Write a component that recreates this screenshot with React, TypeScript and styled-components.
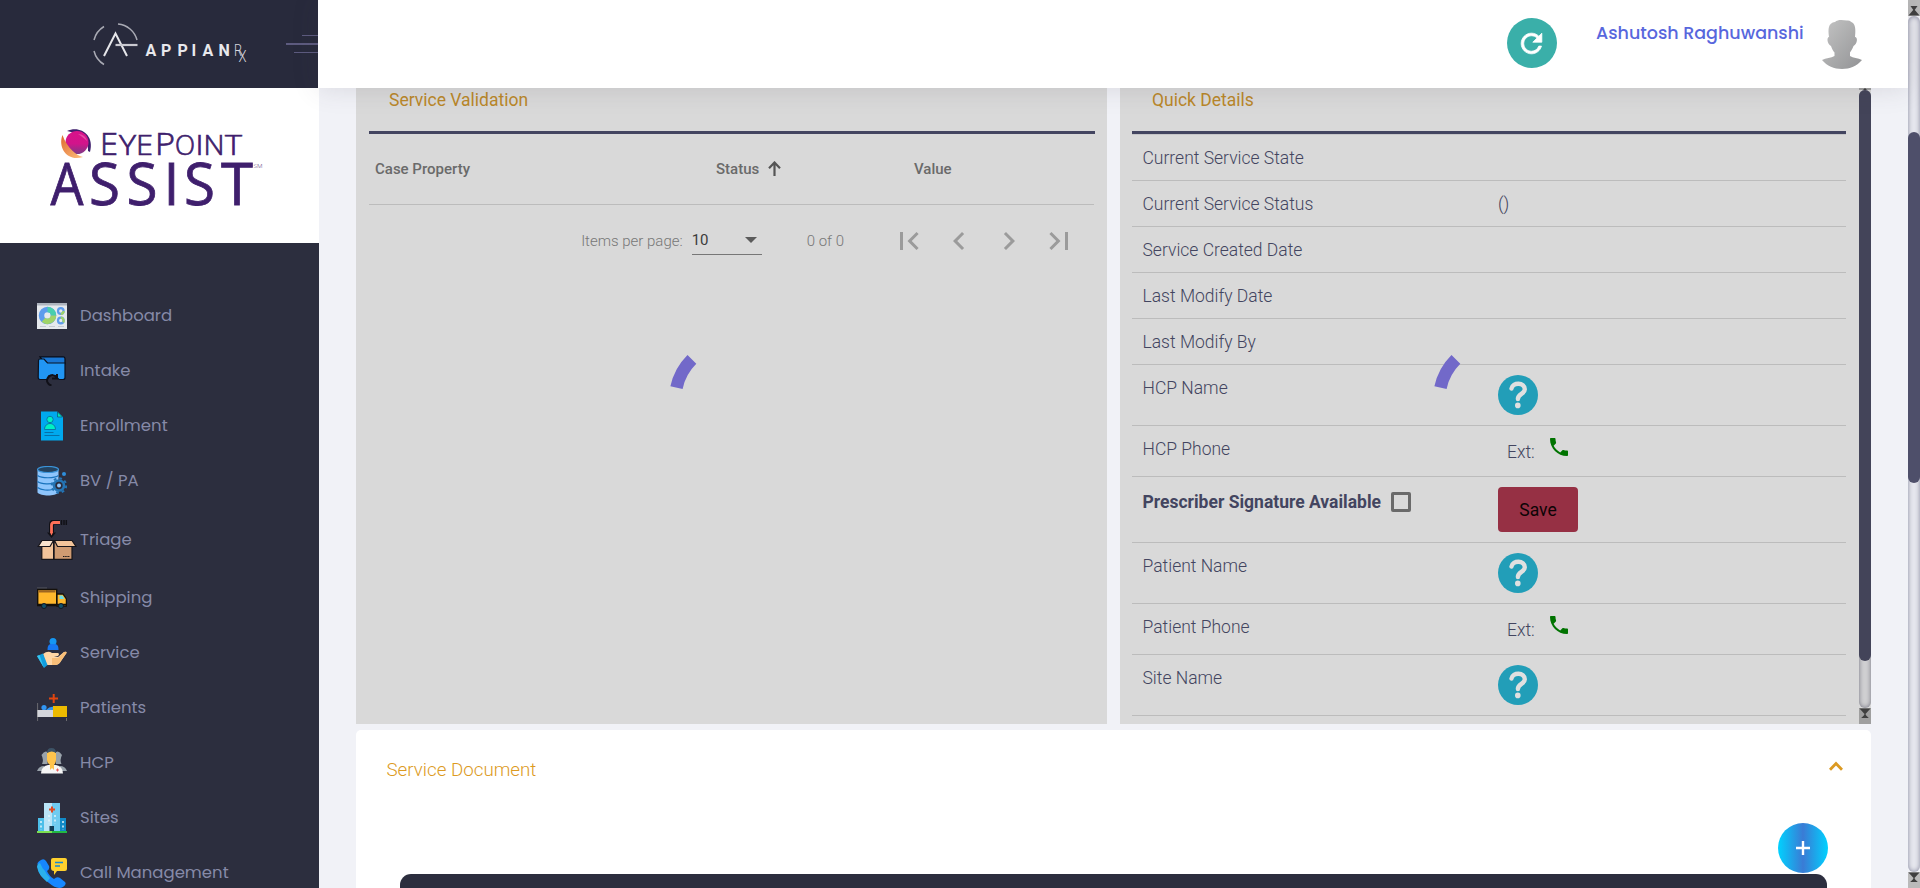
import React from 'react';
import styled, { createGlobalStyle } from 'styled-components';

const sans = `Roboto, "Liberation Sans", sans-serif`;
const geo = `Poppins, Inter, "Open Sans", sans-serif`;

const GlobalStyle = createGlobalStyle`
  *, *::before, *::after { box-sizing: border-box; }
  body { margin: 0; background: #f1f2f7; font-family: ${sans}; font-weight: 300; overflow: hidden; }
  svg { display: block; flex: none; }
`;

const Screen = styled.div`display: flex; height: 888px; overflow: hidden;`;
const Page = styled.div`flex: 1; min-width: 0; display: flex; flex-direction: column;`;
const TopBar = styled.div`display: flex; height: 88px; flex: none;`;
const Brand = styled.div`
  width: 318px; background: #282a3c; display: flex; flex: none;
`;
const Header = styled.header`
  flex: 1; background: #fff; position: relative; z-index: 2;
  box-shadow: 0 1px 24px 1px rgba(69, 65, 78, 0.13);
  display: flex; justify-content: flex-end; padding: 18px 46px 0 0;
`;
const RefreshButton = styled.button`
  width: 50px; height: 50px; border: 0; border-radius: 50%; padding: 0 2px 0 0;
  background: #3aafa9; display: flex; align-items: center; justify-content: center;
  margin-right: 39px;
`;
const UserName = styled.span`
  width: 209px; margin-right: 17px; font: 500 17.5px/30px ${geo};
  color: #5867dd; white-space: nowrap;
`;
const Body = styled.div`flex: 1; display: flex; min-height: 0;`;
const Sidebar = styled.aside`
  width: 319px; flex: none; background: #2c2e3e; overflow: hidden;
`;
const LogoPanel = styled.div`height: 155px; background: #fff;`;
const Nav = styled.nav`padding-top: 45.5px;`;
const NavItem = styled.a<{ $tall?: boolean }>`
  height: ${p => (p.$tall ? 62 : 55)}px; display: flex; align-items: center; padding-left: 37px;
`;
const NavIcon = styled.span<{ $tall?: boolean }>`
  width: 43px; flex: none;
  svg { width: ${p => (p.$tall ? 40 : 30)}px; height: ${p => (p.$tall ? 40 : 30)}px; }
`;
const NavLabel = styled.span<{ $tall?: boolean }>`
  font: 400 16.5px/24px ${geo}; color: #868aa8; white-space: nowrap;
  padding: ${p => (p.$tall ? '1px 0 0' : '0 0 1px')};
`;

const Content = styled.main`
  flex: 1; min-width: 0; padding: 0 37px; display: flex; flex-direction: column; gap: 6px;
`;
const Panels = styled.div`display: flex; gap: 13px; height: 636px; flex: none;`;
const Panel = styled.section`
  position: relative; width: 751px; background: #d9d9d9; display: flex;
`;
const PanelInner = styled.div<{ $right?: boolean }>`
  flex: 1; padding: ${p => (p.$right ? '0 13px 0 12px' : '0 12px 0 13px')}; overflow: hidden;
`;
const PanelTitle = styled.h3`
  margin: 0; height: 46px; padding: 1px 0 0 20px; border-bottom: 3px solid #434560;
  font: 400 17.5px/22px ${sans}; color: #b98729;
`;
const HeadRow = styled.div`
  height: 71px; display: grid; grid-template-columns: 341px 198px 1fr; align-items: center;
  padding: 0 0 1px 6px; border-bottom: 1px solid #bcbcbc; margin-right: 1px;
  font: 500 15px/20px ${sans}; color: #6a6a6a;
`;
const HeadCell = styled.div`display: flex; align-items: center; gap: 9px;`;
const Paginator = styled.div`
  display: flex; align-items: center; justify-content: flex-end; height: 71px; padding-right: 18px;
  font-size: 15px; color: #777;
`;
const PageSize = styled.div`
  width: 70px; height: 28px; margin: 0 45px 0 9px; padding: 0 5px 0 0;
  border-bottom: 1px solid #777; display: flex; align-items: center; justify-content: space-between;
  font-weight: 400; color: #3c3c3c;
`;
const Caret = styled.i`
  border: 6.5px solid transparent; border-top-color: #5b5b5b; border-bottom: 0;
`;
const PagerButtons = styled.div`display: flex; gap: 14px; margin-left: 47px; svg { fill: #9b9b9b; }`;

const DetailRow = styled.div<{ $h: number }>`
  height: ${p => p.$h}px; border-bottom: 1px solid #bcbcbc; display: flex;
  font-size: 17.5px; line-height: 22px; color: #434560;
`;
const DetailLabel = styled.div<{ $bold?: boolean }>`
  width: 366px; flex: none; padding: ${p => (p.$bold ? 14 : 12)}px 0 0 10.5px;
  font-weight: ${p => (p.$bold ? 700 : 300)}; font-size: 17.5px;
  display: flex; gap: 10px;
`;
const Checkbox = styled.span`
  width: 20px; height: 20px; border: 3px solid #6a6a6a; border-radius: 2px; margin-top: 1px;
`;
const Plain = styled.div`padding-top: 12px;`;
const PhoneLine = styled.div`
  display: flex; gap: 12px; padding: 15px 0 0 9px; svg { margin-top: -6px; }
`;
const HelpWrap = styled.div`padding-top: 10px;`;
const SaveButton = styled.button`
  width: 80px; height: 45px; margin-top: 10px; padding: 0; border: 0; border-radius: 4px; background: #963044;
  font: 400 17.5px/20px ${sans}; color: #0c0406;
`;
const Spinner = styled.svg`
  position: absolute; left: 313px; top: 249px; z-index: 1;
`;

const Bar = styled.div`
  width: 12px; flex: none; display: flex; flex-direction: column; position: relative;
`;
const BarButton = styled.div<{ $dark?: boolean; $h?: number }>`
  height: ${p => p.$h ?? 16}px; background: ${p => (p.$dark ? '#9f9f9f' : '#bababa')};
  display: flex; justify-content: center; align-items: center; overflow: hidden;
`;
const Track = styled.div<{ $dark?: boolean }>`
  flex: 1; border-radius: 6px; background: ${p => (p.$dark ? '#d0d0d2' : '#e6e7ee')};
  box-shadow: inset 0 0 5px ${p => (p.$dark ? '#73737f' : '#85879c')};
`;
const Thumb = styled.div<{ $top: number; $h: number; $dark?: boolean }>`
  height: ${p => p.$h}px; margin-top: ${p => p.$top}px; border-radius: 6px;
  background: ${p => (p.$dark ? '#434459' : '#4e4f6a')};
`;

const DocPanel = styled.section`
  flex: 1; background: #fff; border-radius: 5px 5px 0 0; display: flex; flex-direction: column;
`;
const DocHead = styled.div`
  height: 93px; flex: none; display: flex; justify-content: space-between; padding: 28px 28px 0 30.5px;
  font-size: 18.75px; line-height: 24px; color: #dc9a22; svg { margin-top: 3px; }
`;
const DocActions = styled.div`display: flex; justify-content: flex-end; padding-right: 43px; height: 51px; flex: none;`;
const AddButton = styled.button`
  width: 50px; height: 50px; border: 0; border-radius: 50%; padding: 0 0 1px;
  background: linear-gradient(90deg, #00d2ff, #3a7bd5, #00d2ff);
  display: flex; align-items: center; justify-content: center;
`;
const DocTable = styled.div`
  flex: 1; margin: 0 44px; background: #2c2e3e; border-radius: 11px 11px 0 0;
`;

const AppianLogo = () => (
  <svg width="318" height="88" viewBox="0 0 318 88" fill="none">
    <g stroke="#a9aab4" strokeWidth="1.5">
      <path d="M118 24a21.5 21.5 0 0 1 19 16M94 40a22 22 0 0 1 10-13.500M94 51a22 22 0 0 0 10 13.500" />
    </g>
    <path d="M104 56l11.500-22.500L127 56" stroke="#e6e6ea" strokeWidth="2" />
    <path d="M115.500 45h22" stroke="#c9c9d0" strokeWidth="2.200" />
    <text x="145.500 161 177.500 191.500 202.500 218.500" y="56" fontFamily="Roboto" fontWeight="700" fontSize="16" fill="#e8e8ec">APPIAN</text>
    <text x="234" y="56" fontFamily="Roboto" fontSize="16" fontWeight="300" fill="#d8d8de" textLength="8" lengthAdjust="spacingAndGlyphs">R</text>
    <text x="238.500" y="62" fontFamily="Roboto" fontSize="16" fontWeight="300" fill="#d8d8de" textLength="8" lengthAdjust="spacingAndGlyphs">X</text>
    <path d="M302 35.500h16M294 52.500h24" stroke="#5d5b7f" />
    <path d="M286 44h32" stroke="#5d5b7f" strokeWidth="2" />
  </svg>
);

const smallLetters: [string, number, number, number][] = [
  ['E', 100, 31, 18], ['Y', 119, 27, 17], ['E', 136, 27, 17], ['P', 155, 31, 20],
  ['O', 175, 27, 20], ['I', 195.5, 27, 8], ['N', 203.5, 27, 21], ['T', 225, 27, 17],
];
const bigLetters: [string, number, number][] = [
  ['A', 50.5, 33], ['S', 89, 31], ['S', 126.5, 31], ['I', 163.5, 16], ['S', 184, 31], ['T', 221, 32],
];
const EyePointLogo = () => (
  <svg width="319" height="155" viewBox="0 88 319 155">
    <defs>
      <linearGradient id="orb" x1="0" y1="0" x2="0" y2="1">
        <stop offset="0" stopColor="#d9128a" /><stop offset=".55" stopColor="#d2148b" /><stop offset="1" stopColor="#7c3a86" />
      </linearGradient>
      <linearGradient id="flame" x1="0" y1="0" x2="1" y2="1">
        <stop offset="0" stopColor="#dd6a30" /><stop offset="1" stopColor="#ffc07c" />
      </linearGradient>
    </defs>
    <path d="M67 131c12-6 28 3 23 21l-2-1c1-8-4-17-21-20z" fill="#3f1f6d" />
    <circle cx="77" cy="142.500" r="11.500" fill="url(#orb)" />
    <path d="M62.500 135c-5 13 5 27 20.500 22-6-1-16-9-20.500-22z" fill="url(#flame)" />
    <path d="M78 134c5 0 8 3 9 7-3-3-6-5-9-7z" fill="#e966b0" opacity=".7" />
    <g fill="#3f1f6d" stroke="#3f1f6d" fontFamily="'Open Sans', sans-serif">
      {smallLetters.map(([c, x, s, w], i) => (
        <text key={i} x={x} y="155" fontSize={s} fontWeight="300" strokeWidth=".7" textLength={w} lengthAdjust="spacingAndGlyphs">{c}</text>
      ))}
      {bigLetters.map(([c, x, w], i) => (
        <text key={i} x={x} y="204.500" fontSize="58" fontWeight="400" strokeWidth=".8" textLength={w} lengthAdjust="spacingAndGlyphs">{c}</text>
      ))}
      <text x="253.500" y="168" fontSize="5.500" stroke="none" textLength="9" lengthAdjust="spacingAndGlyphs">SM</text>
    </g>
  </svg>
);

const icons: Record<string, React.ReactNode> = {
  Dashboard: (<>
    <path fill="#e6e9ed" d="M0 2h30v26H0z" /><path fill="#aeb4be" d="M0 2h30v2.500H0z" />
    <g fill="none" strokeWidth="5.500"><circle cx="10.500" cy="14.500" r="6" stroke="#5d9cec" /><path d="M10.500 8.500a6 6 0 0 1 6 6" stroke="#48cfad" /><path d="M16.500 14.500a6 6 0 0 1-10 4.300" stroke="#a0d468" /></g>
    <g fill="none" strokeWidth="2.200"><circle cx="23.800" cy="10" r="2.800" stroke="#5d9cec" /><circle cx="23.800" cy="19.500" r="2.800" stroke="#5d9cec" /><path d="M26.600 10a2.800 2.800 0 0 1-2.800 2.800M23.800 16.700a2.800 2.800 0 0 1 2.800 2.800v2" stroke="#a0d468" /></g>
    <path stroke="#c5cad2" d="M3 25.500h6M12 25.500h6M21 25.500h6" />
  </>),
  Intake: (<>
    <path fill="#1976d2" stroke="#0a0a12" strokeWidth="1.200" d="M3 .8h23.500q1.500 0 1.500 2v5H8z" />
    <path fill="#2196f3" stroke="#0a1220" strokeWidth="1.200" d="M1.500 4.500c0-1 .8-1.500 1.500-1.500h4l3.500 4H28v14.500c0 1-.8 2-2 2h-4l-4-4h-6l-2 4H3c-1 0-1.800-1-1.800-2z" />
    <path fill="none" stroke="#101018" strokeWidth="2" d="M14.500 29.500c-4-1-6-5-3-8.500 3-3 6-2 8 0M20 18v4.500h-5" />
  </>),
  Enrollment: (<>
    <path fill="#00a9ee" d="M4 .5h17l5 5v24H4z" /><path fill="#2c2e3e" d="M20 0h6v6z" /><path fill="#00e6b8" d="M20.500 1v5h5z" stroke="#123c62" strokeWidth=".6" />
    <g fill="#00f0c4" stroke="#087aa8"><circle cx="13" cy="8.500" r="3.200" /><path d="M7.500 18.500c0-8 11-8 11 0z" /></g>
    <path stroke="#0570a8" d="M7.500 21.500h9M7.500 24.500h15" />
  </>),
  'BV / PA': (<>
    <path fill="#8ec5fc" d="M.5 3.500v23c3 4 18 4 21 0v-23z" /><ellipse cx="11" cy="3.500" rx="10.500" ry="3" fill="#24425f" stroke="#3b93d8" strokeWidth="1.200" />
    <path fill="none" stroke="#1a73bd" strokeWidth="1.200" d="M.5 9.500c4 3 17 3 21 0M.5 15.500c4 3 14 3 17 1M.5 21.500c4 3 11 3 15 2" />
    <circle cx="22" cy="19.500" r="5" fill="#2c2e3e" stroke="#2474b5" strokeWidth="2.600" /><circle cx="22" cy="19.500" r="7.200" fill="none" stroke="#2474b5" strokeWidth="2" strokeDasharray="2.800 2.850" /><circle cx="22" cy="19.500" r="2" fill="#8ec5fc" /><circle cx="27" cy="8" r="2" fill="#2f8edb" />
  </>),
  Triage: (<>
    <path fill="none" stroke="#101016" strokeWidth="5" d="M14.500 14V4.500q0-2.500 2.500-2.500h6" />
    <path fill="none" stroke="#ff7058" strokeWidth="2.800" d="M14.500 14V5q0-2.500 2.500-2.500h6" />
    <path stroke="#101016" strokeWidth="1.500" d="M24.500 0v5M27 0v5M29.300 0v5" />
    <path fill="#101016" d="M10 12.500h9L14.500 18z" /><path fill="#ff7058" d="M12.800 12h3.400l-1.700 3.500z" />
    <path fill="#f3c49a" stroke="#17151a" strokeWidth="1.200" d="M4.800 22h12v17.300h-12z" /><path fill="#cf9b72" stroke="#17151a" strokeWidth="1.200" d="M16.800 22H35v17.300H16.800z" />
    <path fill="#fbe3cd" stroke="#17151a" strokeWidth="1.200" d="M5 20.500h11.500l-3.500 6H1.200z" /><path fill="#f3c49a" stroke="#17151a" strokeWidth="1.200" d="M17.500 20.500H35l4 6H20.500z" />
    <path stroke="#17151a" strokeWidth="1.400" d="M16.800 21v18.500" /><path stroke="#17151a" strokeDasharray="1.500 .7" d="M26 36.500h7" />
  </>),
  Shipping: (<>
    <path stroke="#55565f" d="M0 5h10" /><path fill="#ffb72c" stroke="#15110b" strokeWidth="1.400" d="M.7 6.500h19v16H.7z" /><path fill="#9d6520" d="M1.500 7.200h17v2.300h-17z" />
    <path fill="#ffb72c" stroke="#15110b" strokeWidth="1.300" d="M20 11h6l3.400 5v7H20z" /><path fill="#6ddde6" d="M22.500 12.500h3l2 3.500h-5z" /><path stroke="#15110b" strokeWidth="1.500" d="M0 21.500h30" />
    <circle cx="7" cy="23" r="2.500" fill="#12516c" stroke="#111820" /><circle cx="24" cy="23" r="2.500" fill="#12516c" stroke="#111820" />
  </>),
  Service: (<>
    <circle cx="16" cy="3.500" r="3.500" fill="#1597f3" /><path fill="#1778f2" d="M10.500 12c0-6 2.500-6 5.500-6s5.500 0 5.500 6z" />
    <path fill="#ffd6a5" d="M6 16q5-4 9-1h6q2 1 0 3h-4l4 1 6-5q3-1 2.500 1L24 23q-2 4-6 4H9z" /><path fill="#f8be78" d="M15 20h6l6-6q3-1 2.500 1L24 23q-2 4-6 4h-3z" />
    <path fill="#119ddd" d="M0 18l6-2.500L10.500 27 7 30z" /><path fill="#36c4ef" d="M0 18l2.500-1L7 30z" />
  </>),
  Patients: (<>
    <path fill="#e0450f" d="M15.700 1h2v9h-2z" /><path fill="#e0450f" d="M12 4.500h9v2h-9z" />
    <path stroke="#6b6b70" d="M.6 10v18M29.500 25v3" /><circle cx="7" cy="14.500" r="2.600" fill="#3196f3" /><path fill="#3196f3" d="M9 17q4-4 8-3v3z" />
    <path fill="#d3d5db" d="M0 17h16.500v7H0z" /><path fill="#edbb00" d="M16 13h14v11H16z" /><path fill="#a9aaae" d="M0 17h1v7H0z" />
  </>),
  HCP: (<>
    <g fill="#99a2aa"><path d="M4.500 7q3-5 6-3v12H5q2-4-.5-9zM25 7q-3-5-6-3v12h5.500q-2-4 .5-9z" /><path d="M0 23q2-5 7-5v5zM30 23q-2-5-7-5v5z" /></g>
    <path fill="#f6f6f6" d="M4 25.500q0-7 7-8.500h8q7 1.500 7 8.500z" /><path fill="#ffc44d" d="M10 5q5-5 9 0v7q0 3-2 5v5l-2-2-2 2v-5q-3-2-3-5z" /><path fill="#3d5366" d="M10 5q0-5 4.500-5T19 5q-4-3-9 0z" /><path fill="#e95b5b" d="M20 20.500h1v1h1v1h-1v1h-1v-1h-1v-1h1z" />
  </>),
  Sites: (<>
    <path fill="#4cbfe9" d="M1 15h7v13H1z" /><path fill="#118ac7" d="M22 15h7v13h-7z" /><path fill="#b9e4f7" d="M7 0h8v28H7z" /><path fill="#6fcbf0" d="M15 0h8v28h-8z" />
    <path fill="#e04a23" d="M14 3.500h2v2h2v2h-2v2h-2v-2h-2v-2h2z" /><path fill="#123c56" d="M12.500 23h4.500v5h-4.500z" />
    <path stroke="#e4f5fc" strokeWidth="1.500" strokeDasharray="2 2.400" d="M4 18v9M12 12v9M18 12v9M26 18v9" /><path fill="#7be050" d="M0 28h15v2H0z" /><path fill="#22b843" d="M15 28h15v2H15z" />
  </>),
  'Call Management': (<>
    <path fill="#1687ff" d="M1 7q-2-2 3-5 3-2 5 1l3 5q1 3-2 5 2 5 7 8 3-3 6-1l5 4q2 2-2 5-6 3-14-4Q0 17 1 7z" />
    <path fill="#2bb0ec" d="M0 9q1 5 4 9l6 6 3-4q-4-4-5-7-3-3-5-8-3 1-3 4z" />
    <path fill="#ffd12e" d="M16 0h12q2 0 2 2v9q0 2-2 2h-8l-3 4v-4q-3 0-3-3V2q0-2 2-2z" /><path stroke="#1687d6" strokeWidth="1.500" d="M18 4.500h8M18 8h5" />
  </>),
};
const order = ['Dashboard', 'Intake', 'Enrollment', 'BV / PA', 'Triage', 'Shipping', 'Service', 'Patients', 'HCP', 'Sites', 'Call Management'];

const Help = () => (
  <HelpWrap>
    <svg width="40" height="40" viewBox="0 0 40 40" fill="none">
      <circle cx="20" cy="20" r="20" fill="#229eb8" />
      <path d="M13.500 13.500C14.500 7 26.800 7 26.800 14.200C26.800 19 19.900 18.800 19.900 24" stroke="#e0e0e0" strokeWidth="4.400" strokeLinecap="round" />
      <circle cx="19.800" cy="30.400" r="2.800" fill="#e0e0e0" />
    </svg>
  </HelpWrap>
);
const Phone = () => (
  <PhoneLine>
    <span>Ext:</span>
    <svg width="24" height="24" viewBox="0 0 24 24" fill="#007300">
      <path d="M6.620 10.790c1.440 2.830 3.760 5.140 6.590 6.590l2.200-2.200c.27-.27.67-.36 1.020-.24 1.120.37 2.330.57 3.570.57.550 0 1 .45 1 1V20c0 .55-.45 1-1 1-9.390 0-17-7.610-17-17 0-.55.45-1 1-1h3.500c.55 0 1 .45 1 1 0 1.250.2 2.450.57 3.570.11.350.03.740-.25 1.020l-2.200 2.200z" />
    </svg>
  </PhoneLine>
);
const Hourglass = () => (
  <svg width="12" height="10" viewBox="0 0 12 10" fill="#3f3f3f"><path d="M3 0h6L7 3 6 4 5 3zM6 4l6 6H0z" /></svg>
);
const HourglassDown = () => (
  <svg width="12" height="16" viewBox="0 0 12 16" fill="#3f3f3f"><path d="M.5 .5h11L6 6.500zM6 5l1.200 2.500L9.800 10H2.200l2.600-2.500z" /></svg>
);
const Loading = () => (
  <Spinner width="125" height="125" viewBox="0 0 125 125" fill="none">
    <path d="M7.500 50.600A56 56 0 0 1 22.900 22.400" stroke="#7269c9" strokeWidth="12.500" />
  </Spinner>
);
const Pager = ({ d }: { d: string }) => <svg width="36" height="36" viewBox="0 0 24 24"><path d={d} /></svg>;

const rows: { h: number; label: string; bold?: boolean; value?: React.ReactNode }[] = [
  { h: 46, label: 'Current Service State' },
  { h: 46, label: 'Current Service Status', value: <Plain>()</Plain> },
  { h: 46, label: 'Service Created Date' },
  { h: 46, label: 'Last Modify Date' },
  { h: 46, label: 'Last Modify By' },
  { h: 61, label: 'HCP Name', value: <Help /> },
  { h: 51, label: 'HCP Phone', value: <Phone /> },
  { h: 66, label: 'Prescriber Signature Available', bold: true, value: <SaveButton>Save</SaveButton> },
  { h: 61, label: 'Patient Name', value: <Help /> },
  { h: 51, label: 'Patient Phone', value: <Phone /> },
  { h: 61, label: 'Site Name', value: <Help /> },
];
const DetailList = styled.div`border-top: 1px solid #c6c6c8;`;

export default function App() {
  return (
    <Screen>
      <GlobalStyle />
      <Page>
        <TopBar>
          <Brand><AppianLogo /></Brand>
          <Header>
            <RefreshButton>
              <svg width="31" height="31" viewBox="0 0 24 24" fill="#fff" stroke="#fff" strokeWidth=".6"><path d="M17.650 6.350C16.200 4.900 14.210 4 12 4c-4.420 0-7.990 3.580-7.990 8s3.570 8 7.990 8c3.730 0 6.840-2.550 7.730-6h-2.080c-.82 2.330-3.040 4-5.650 4-3.310 0-6-2.690-6-6s2.690-6 6-6c1.660 0 3.140.69 4.220 1.780L13 11h7V4l-2.350 2.350z" /></svg>
            </RefreshButton>
            <UserName>Ashutosh Raghuwanshi</UserName>
            <svg width="40" height="51" viewBox="0 0 40 51">
              <defs><linearGradient id="man" x1="0" y1="0" x2="1" y2="1"><stop offset="0" stopColor="#c4c4c4" /><stop offset="1" stopColor="#929395" /></linearGradient></defs>
              <path fill="url(#man)" d="M7 19C6 11 6 5 13 4C16 1 21 2 25 2.500C28 2 29 4 31 5C34 8 33.500 14 33 19C36 19 35.500 26 31.500 28C30.500 31 29 33 28 34.500V38C31 40 36 40 40 42C35 48 28 51 20 51S5 48 0 42C4 40 9 40 12.500 38V34.500C11 33 10 31 9 28C5 26 4.500 19 7 19Z" />
            </svg>
          </Header>
        </TopBar>
        <Body>
          <Sidebar>
            <LogoPanel><EyePointLogo /></LogoPanel>
            <Nav>
              {order.map(name => {
                const tall = name === 'Triage';
                return (
                  <NavItem key={name} $tall={tall}>
                    <NavIcon $tall={tall}><svg viewBox={tall ? '0 0 40 40' : '0 0 30 30'}>{icons[name]}</svg></NavIcon>
                    <NavLabel $tall={tall}>{name}</NavLabel>
                  </NavItem>
                );
              })}
            </Nav>
          </Sidebar>
          <Content>
            <Panels>
              <Panel>
                <PanelInner>
                  <PanelTitle>Service Validation</PanelTitle>
                  <HeadRow>
                    <HeadCell>Case Property</HeadCell>
                    <HeadCell>Status
                      <svg width="13" height="15" viewBox="0 0 13 15" fill="none" stroke="#555" strokeWidth="2.200"><path d="M6.500 15V2M1 7.200l5.500-5.700L12 7.200" /></svg>
                    </HeadCell>
                    <HeadCell>Value</HeadCell>
                  </HeadRow>
                  <Paginator>
                    <span>Items per page:</span>
                    <PageSize>10<Caret /></PageSize>
                    <span>0 of 0</span>
                    <PagerButtons>
                      <Pager d="M18.410 16.590L13.820 12l4.590-4.590L17 6l-6 6 6 6zM6 6h2v12H6z" />
                      <Pager d="M15.410 7.410L14 6l-6 6 6 6 1.410-1.410L10.830 12z" />
                      <Pager d="M10 6L8.590 7.410 13.170 12l-4.580 4.590L10 18l6-6z" />
                      <Pager d="M5.590 7.410L10.180 12l-4.590 4.590L7 18l6-6-6-6zM16 6h2v12h-2z" />
                    </PagerButtons>
                  </Paginator>
                </PanelInner>
                <Loading />
              </Panel>
              <Panel>
                <PanelInner $right>
                  <PanelTitle>Quick Details</PanelTitle>
                  <DetailList>
                    {rows.map(r => (
                      <DetailRow key={r.label} $h={r.h}>
                        <DetailLabel $bold={r.bold}>{r.label}{r.bold && <Checkbox />}</DetailLabel>
                        {r.value}
                      </DetailRow>
                    ))}
                  </DetailList>
                </PanelInner>
                <Loading />
                <Bar>
                  <BarButton $dark $h={2}><Hourglass /></BarButton>
                  <Track $dark><Thumb $dark $top={0} $h={571} /></Track>
                  <BarButton $dark><HourglassDown /></BarButton>
                </Bar>
              </Panel>
            </Panels>
            <DocPanel>
              <DocHead>
                Service Document
                <svg width="14" height="10" viewBox="0 0 14 10" fill="none" stroke="#dc9a22" strokeWidth="2.800"><path d="M1 8.800l6-6.300 6 6.300" /></svg>
              </DocHead>
              <DocActions>
                <AddButton><svg width="14" height="14" viewBox="0 0 14 14" stroke="#fff" strokeWidth="2.400"><path d="M7 0v14M0 7h14" /></svg></AddButton>
              </DocActions>
              <DocTable />
            </DocPanel>
          </Content>
        </Body>
      </Page>
      <Bar>
        <BarButton><svg width="12" height="16" viewBox="0 0 12 16" fill="#3f3f3f"><path d="M2.500 6h7L6 11zM6 9l5.500 6.500H.5z" /></svg></BarButton>
        <Track><Thumb $top={116} $h={351} /></Track>
        <BarButton><HourglassDown /></BarButton>
      </Bar>
    </Screen>
  );
}
